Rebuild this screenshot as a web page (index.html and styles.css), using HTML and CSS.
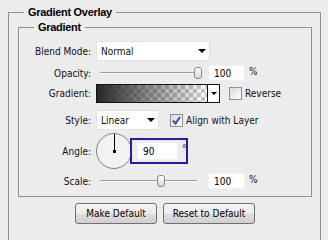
FILE: index.html
```html
<!DOCTYPE html>
<html>
<head>
    <link rel="stylesheet" href="styles.css">
</head>
<body>
    <fieldset class="outer">
        <legend>Gradient Overlay</legend>
        <fieldset class="inner">
            <legend>Gradient</legend>

            <div class="row row-blend">
                <label>Blend Mode:</label>
                <div class="select blend-select"><span>Normal</span><i class="arrow"></i></div>
            </div>

            <div class="row row-opacity">
                <label>Opacity:</label>
                <div class="slider">
                    <div class="track"></div>
                    <div class="thumb" style="left: 98px"></div>
                </div>
                <input class="num" type="text" value="100">
                <span class="unit">%</span>
            </div>

            <div class="row row-gradient">
                <label>Gradient:</label>
                <div class="gradient-box">
                    <div class="gradient-fill"></div>
                    <div class="gradient-drop"><i class="arrow small"></i></div>
                </div>
                <span class="check check-reverse"></span>
                <span class="check-label">Reverse</span>
            </div>

            <div class="row row-style">
                <label>Style:</label>
                <div class="select style-select"><span>Linear</span><i class="arrow"></i></div>
                <span class="check check-align">
                    <svg width="11" height="11" viewBox="0 0 11 11">
                        <path d="M2 5.5 L4.5 8.5 L9 2" fill="none" stroke="#2b54b8" stroke-width="2"/>
                    </svg>
                </span>
                <span class="check-label">Align with Layer</span>
            </div>

            <div class="row row-angle">
                <label>Angle:</label>
                <svg class="dial" width="36" height="36" viewBox="0 0 36 36">
                    <circle cx="18" cy="18" r="17.5" fill="#f2f2f2" stroke="#7f7f7f"/>
                    <line x1="18.5" y1="1" x2="18.5" y2="18" stroke="#000"/>
                    <rect x="17" y="17" width="3" height="3" fill="#000"/>
                </svg>
                <div class="angle-box">
                    <input class="num angle-num" type="text" value="90">
                    <span class="degree">°</span>
                </div>
            </div>

            <div class="row row-scale">
                <label>Scale:</label>
                <div class="slider">
                    <div class="track"></div>
                    <div class="thumb" style="left: 61px"></div>
                </div>
                <input class="num" type="text" value="100">
                <span class="unit">%</span>
            </div>
        </fieldset>

        <div class="buttons">
            <button class="button make">Make Default</button>
            <button class="button reset">Reset to Default</button>
        </div>
    </fieldset>
</body>
</html>
```

FILE: styles.css
```css
body {
    margin: 0;
    width: 328px;
    height: 240px;
    overflow: hidden;
    background-color: #ececec;
    font-family: "DejaVu Sans Condensed", "Liberation Sans", sans-serif;
    font-size: 10px;
    color: #111;
}

fieldset {
    border: 1px solid #8f8f8f;
    min-width: 0;
}

legend {
    font-family: "Liberation Sans", sans-serif;
    font-weight: bold;
    font-size: 11px;
    letter-spacing: -0.3px;
    line-height: 14px;
    padding: 0 4px;
    color: #000;
}

.outer {
    margin: 5px 7px 0 8px;
    padding: 1px 8px 30px 9px;
}

.outer > legend {
    margin-left: 6px;
}

.inner {
    margin: 0;
    padding: 7px 0 7px 0;
}

.inner > legend {
    margin-left: 15px;
}

.row {
    display: flex;
    align-items: center;
}

.row label {
    flex-shrink: 0;
    width: 72px;
    margin-right: 5px;
    text-align: right;
}

.row-blend { height: 20px; }
.row-opacity { height: 16px; margin-top: 4px; }
.row-gradient { height: 19px; margin-top: 3px; }
.row-style { height: 20px; margin-top: 7px; }
.row-angle { height: 36px; margin-top: 3px; }
.row-scale { height: 16px; margin-top: 4px; }

/* dropdowns */
.select {
    box-sizing: border-box;
    height: 20px;
    display: flex;
    align-items: center;
    padding-left: 4px;
    background-color: #fff;
    border: 1px solid #e2e2e2;
}

.blend-select { width: 114px; }
.style-select { width: 63px; }

.arrow {
    margin-left: auto;
    margin-right: 3px;
    width: 0;
    height: 0;
    border-top: 4px solid #000;
    border-left: 4px solid transparent;
    border-right: 4px solid transparent;
}

.arrow.small {
    margin: 0;
    border-top-width: 3px;
    border-left-width: 3px;
    border-right-width: 3px;
}

/* sliders */
.slider {
    position: relative;
    width: 108px;
    height: 16px;
}

.track {
    position: absolute;
    left: 4px;
    right: 7px;
    top: 7px;
    height: 1px;
    background-color: #9c9c9c;
    border-bottom: 1px solid #fafafa;
}

.thumb {
    position: absolute;
    top: 2px;
    box-sizing: border-box;
    width: 8px;
    height: 12px;
    border: 1px solid #8a8a8a;
    border-radius: 3px;
    background: linear-gradient(#ffffff, #d6d6d6);
}

.num {
    box-sizing: border-box;
    width: 37px;
    height: 16px;
    margin-left: 4px;
    padding: 0 0 0 5px;
    border: 1px solid #f0f0f0;
    background-color: #fff;
    font: inherit;
    color: #000;
    outline: none;
}

.unit {
    align-self: flex-start;
    margin-left: 4px;
    margin-top: 1px;
}

/* gradient preview */
.gradient-box {
    box-sizing: border-box;
    width: 124px;
    height: 19px;
    display: flex;
    border: 1px solid #111;
}

.gradient-fill {
    flex: 1;
    background:
        linear-gradient(to right, rgba(40, 40, 40, 1), rgba(40, 40, 40, 0)),
        repeating-conic-gradient(#c9c9c9 0 25%, #ffffff 0 50%) 0 0 / 8px 8px;
}

.gradient-drop {
    width: 11px;
    display: flex;
    align-items: center;
    justify-content: center;
    border-left: 1px solid #111;
    background-color: #fff;
}

/* checkboxes */
.check {
    box-sizing: border-box;
    width: 13px;
    height: 13px;
    display: flex;
    align-items: center;
    justify-content: center;
    border: 1px solid #8e8f8f;
    background: linear-gradient(135deg, #d8d8d8, #ffffff);
}

.check-reverse { margin-left: 9px; }
.check-align { margin-left: 11px; }

.check-label {
    margin-left: 3px;
}

/* angle */
.dial {
    flex-shrink: 0;
}

.angle-box {
    box-sizing: border-box;
    width: 58px;
    height: 26px;
    margin-left: -2px;
    display: flex;
    align-items: center;
    padding: 0 3px 0 5px;
    border: 2px solid #1f1fa6;
}

.angle-num {
    width: 41px;
    height: 18px;
    margin-left: 0;
}

.degree {
    align-self: flex-start;
    margin-left: 4px;
    margin-top: 3px;
}

/* buttons */
.buttons {
    display: flex;
    justify-content: center;
    gap: 6px;
    margin-top: 6px;
}

.button {
    height: 21px;
    padding: 0;
    border: 1px solid #707070;
    border-radius: 3px;
    background: linear-gradient(#f4f4f4 0%, #ebebeb 50%, #dddddd 51%, #d0d0d0 100%);
    font: inherit;
    color: #000;
}

.make { width: 82px; }
.reset { width: 92px; }
```
